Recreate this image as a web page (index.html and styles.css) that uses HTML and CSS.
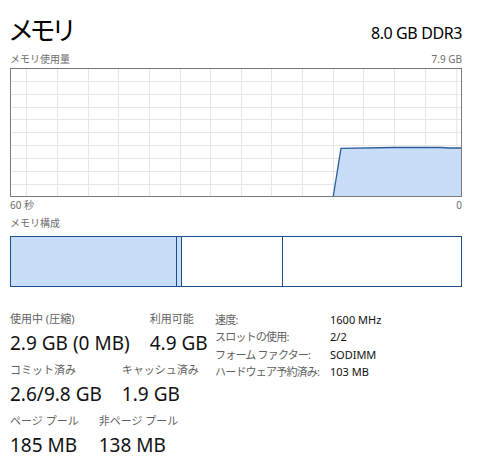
FILE: index.html
```html
<!DOCTYPE html>
<html lang="ja">
<head>
<meta charset="utf-8">
<link rel="stylesheet" href="styles.css">
</head>
<body>
<div class="page">
  <header class="head">
    <h1 class="title">メモリ</h1>
    <div class="spec">8.0 GB DDR3</div>
  </header>
  <div class="caption"><span>メモリ使用量</span><span>7.9 GB</span></div>
  <div class="chart">
    <svg width="452" height="128" viewBox="0 0 452 128">
      <g class="grid">
        <line x1="15.5" y1="0" x2="15.5" y2="128"/>
        <line x1="46.5" y1="0" x2="46.5" y2="128"/>
        <line x1="77.5" y1="0" x2="77.5" y2="128"/>
        <line x1="107.5" y1="0" x2="107.5" y2="128"/>
        <line x1="138.5" y1="0" x2="138.5" y2="128"/>
        <line x1="169.5" y1="0" x2="169.5" y2="128"/>
        <line x1="199.5" y1="0" x2="199.5" y2="128"/>
        <line x1="230.5" y1="0" x2="230.5" y2="128"/>
        <line x1="260.5" y1="0" x2="260.5" y2="128"/>
        <line x1="291.5" y1="0" x2="291.5" y2="128"/>
        <line x1="322.5" y1="0" x2="322.5" y2="128"/>
        <line x1="352.5" y1="0" x2="352.5" y2="128"/>
        <line x1="383.5" y1="0" x2="383.5" y2="128"/>
        <line x1="414.5" y1="0" x2="414.5" y2="128"/>
        <line x1="445.5" y1="0" x2="445.5" y2="128"/>
        <line x1="0" y1="13.5" x2="452" y2="13.5"/>
        <line x1="0" y1="26.5" x2="452" y2="26.5"/>
        <line x1="0" y1="39.5" x2="452" y2="39.5"/>
        <line x1="0" y1="51.5" x2="452" y2="51.5"/>
        <line x1="0" y1="64.5" x2="452" y2="64.5"/>
        <line x1="0" y1="77.5" x2="452" y2="77.5"/>
        <line x1="0" y1="90.5" x2="452" y2="90.5"/>
        <line x1="0" y1="103.5" x2="452" y2="103.5"/>
        <line x1="0" y1="116.5" x2="452" y2="116.5"/>
      </g>
      <polygon class="area" points="322.3,128 330,80.3 382,79.5 430,79.5 438,80 452,80 452,128"/>
      <polyline class="line" points="322.3,128 330,80.3 382,79.5 430,79.5 438,80 452,80"/>
    </svg>
  </div>
  <div class="caption axis"><span>60 秒</span><span>0</span></div>
  <div class="caption comp-label"><span>メモリ構成</span></div>
  <div class="comp">
    <div class="seg used"></div>
    <div class="seg modified"></div>
    <div class="seg standby"></div>
    <div class="seg free"></div>
  </div>
  <section class="stats">
    <div class="left">
      <div class="row">
        <div class="stat"><div class="label">使用中 (圧縮)</div><div class="value">2.9 GB (0 MB)</div></div>
        <div class="stat"><div class="label">利用可能</div><div class="value">4.9 GB</div></div>
      </div>
      <div class="row">
        <div class="stat"><div class="label">コミット済み</div><div class="value">2.6/9.8 GB</div></div>
        <div class="stat"><div class="label">キャッシュ済み</div><div class="value">1.9 GB</div></div>
      </div>
      <div class="row">
        <div class="stat"><div class="label">ページ プール</div><div class="value">185 MB</div></div>
        <div class="stat"><div class="label">非ページ プール</div><div class="value">138 MB</div></div>
      </div>
    </div>
    <dl class="props">
      <dt>速度:</dt><dd>1600 MHz</dd>
      <dt>スロットの使用:</dt><dd>2/2</dd>
      <dt>フォーム ファクター:</dt><dd>SODIMM</dd>
      <dt>ハードウェア予約済み:</dt><dd>103 MB</dd>
    </dl>
  </section>
</div>
</body>
</html>
```

FILE: styles.css
```css
* { box-sizing: border-box; }
html, body { margin: 0; padding: 0; background: #fff; }
body {
  font-family: "Noto Sans", "Noto Sans CJK JP", sans-serif;
  color: #000;
}
.page {
  width: 452px;
  margin-left: 10px;
}
.head {
  display: flex;
  justify-content: space-between;
  align-items: flex-start;
  height: 52px;
}
.title {
  margin: 11px 0 0 -2px;
  font-family: "Noto Sans CJK JP", sans-serif;
  font-weight: 400;
  font-size: 26px;
  line-height: 36px;
  letter-spacing: -4.5px;
}
.spec {
  margin-top: 23px;
  font-size: 16px;
  line-height: 20px;
  letter-spacing: -0.4px;
}
.caption {
  display: flex;
  justify-content: space-between;
  font-size: 10px;
  line-height: 15px;
  color: #6d6d6d;
  height: 16px;
}
.chart {
  height: 129px;
  border: 1px solid #7a7a7a;
  overflow: hidden;
}
.chart svg { display: block; margin-top: -1px; }
.grid line { stroke: #e6e6e6; stroke-width: 1; }
.area { fill: #c8ddf7; }
.line { fill: none; stroke: #2a5d98; stroke-width: 1.3; }
.axis { margin-top: 1px; height: 18px; }
.comp-label { height: 20px; }
.comp {
  display: flex;
  height: 51px;
  border: 1px solid #1d4f8f;
}
.seg { height: 100%; }
.seg.used { width: 166px; background: #c8ddf7; border-right: 1px solid #1d4f8f; }
.seg.modified { width: 5px; background: #c8ddf7; border-right: 1px solid #1d4f8f; }
.seg.standby { width: 101px; border-right: 1px solid #1d4f8f; }
.seg.free { flex: 1; }
.stats {
  display: flex;
  margin-top: 24px;
}
.left {
  width: 205px;
  display: flex;
  flex-direction: column;
  gap: 6px;
}
.row { display: flex; gap: 20px; }
.label {
  font-size: 11px;
  line-height: 16px;
  color: #5f5f5f;
}
.value {
  margin-top: 3px;
  font-size: 19px;
  line-height: 26px;
  color: #111;
}
.props {
  margin: 0;
  display: grid;
  grid-template-columns: 115px auto;
  grid-auto-rows: 17.3px;
  font-size: 11px;
  line-height: 17px;
  align-content: start;
}
.props dt { color: #5f5f5f; letter-spacing: -0.8px; }
.props dd { margin: 0; color: #111; }
```
